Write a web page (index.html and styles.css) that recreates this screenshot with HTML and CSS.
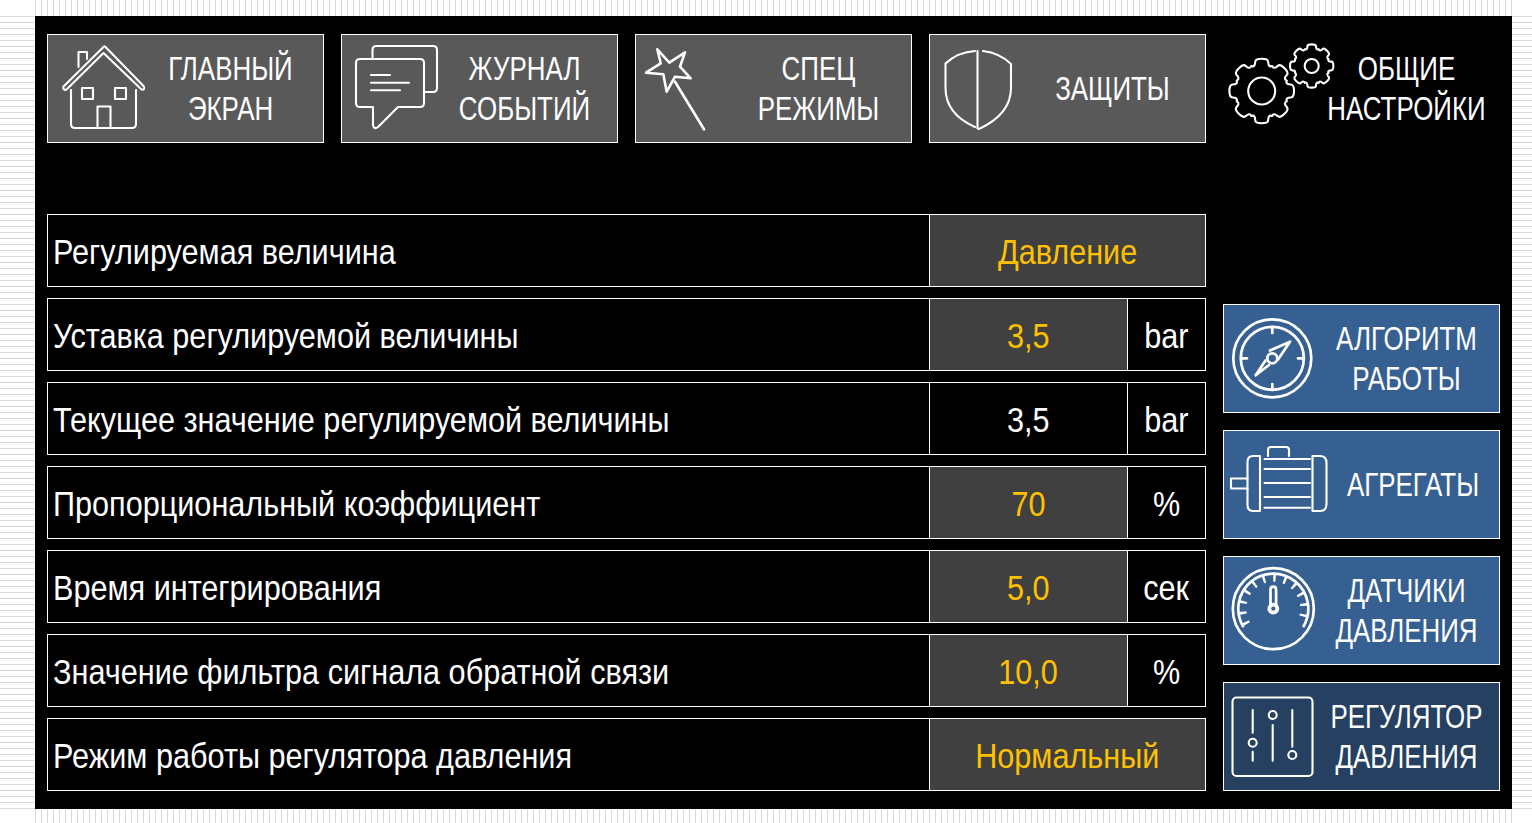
FILE: index.html
```html
<!DOCTYPE html>
<html lang="ru">

<head>
    <meta charset="UTF-8">
    <meta name="viewport" content="width=device-width, initial-scale=1.0">
    <title>Настройки регулятора</title>
    <link rel="stylesheet" href="styles.css">
</head>

<body>
    <div class="page">
        <div class="stripes-v"></div>
        <div class="stripes-h side-left"></div>

        <div class="panel">
            <!-- верхнее меню -->
            <div class="nav">
                <div class="btn btn-gray">
                    <svg class="icon" viewBox="48 35 90 107">
                        <path d="M104 46.5 L63.5 86.5 Q62.5 88 64 89.5 Q65.5 90.5 67 89 L103.5 53 L141 89 Q142.5 90.5 144 89 Q145 87.5 143.5 86 L105.5 47 Q104.5 46 104 46.5Z" />
                        <path d="M71 90 V124 Q71 128 75 128 H132 Q136 128 136 124 V90" />
                        <path d="M78.5 67 V52 H87 V59" />
                        <rect x="82" y="88" width="11" height="11" />
                        <rect x="115" y="88" width="11" height="11" />
                        <path d="M97.5 128 V106.5 H110.5 V128" />
                    </svg>
                    <div class="btn-text">ГЛАВНЫЙ<br>ЭКРАН</div>
                </div>
                <div class="btn btn-gray">
                    <svg class="icon" viewBox="342 35 90 107">
                        <path d="M372.5 58 V50 Q372.5 46 376.5 46 H433 Q437 46 437 50 V88 Q437 92 433 92 H425" />
                        <path d="M360 59 H420 Q424 59 424 63 V103 Q424 107 420 107 H398 L378 127 Q374 130 373 125 V107 H360 Q356 107 356 103 V63 Q356 59 360 59Z" />
                        <path d="M371 75 H390 M371 82.7 H409 M371 90.3 H400" />
                    </svg>
                    <div class="btn-text">ЖУРНАЛ<br>СОБЫТИЙ</div>
                </div>
                <div class="btn btn-gray">
                    <svg class="icon" viewBox="636 35 90 107">
                        <path class="thick" d="M657.3 49.3 L669.3 62.7 L685 52.3 L680 66.7 L690.7 78.3 L675 76.7 L666.7 91.7 L663.3 74.3 L646 72.7 L660.7 63.3Z" />
                        <path class="thick" d="M675 81.7 L704 129.3" />
                    </svg>
                    <div class="btn-text">СПЕЦ<br>РЕЖИМЫ</div>
                </div>
                <div class="btn btn-gray">
                    <svg class="icon" viewBox="930 35 90 107">
                        <path d="M977.5 51 V128.5" />
                        <path d="M975 51 Q958 52 945.5 63.5 V88 Q945.5 114 975 127" />
                        <path d="M983 51 Q1000 53 1011 64 V88 Q1011 114 979 129" />
                    </svg>
                    <div class="btn-text">ЗАЩИТЫ</div>
                </div>
                <div class="btn btn-plain">
                    <svg class="icon" viewBox="1224 35 90 107">
                        <defs>
                            <path id="tooth" d="M-10.3 -24.9 C-7.5 -24 -6.5 -26 -6.5 -29 Q-6.5 -32.3 0 -32.3 Q6.5 -32.3 6.5 -29 C6.5 -26 7.5 -24 10.3 -24.9" />
                        </defs>
                        <g transform="translate(1261.7 91)">
                            <circle r="13.5" />
                            <use href="#tooth" />
                            <use href="#tooth" transform="rotate(45)" />
                            <use href="#tooth" transform="rotate(90)" />
                            <use href="#tooth" transform="rotate(135)" />
                            <use href="#tooth" transform="rotate(180)" />
                            <use href="#tooth" transform="rotate(225)" />
                            <use href="#tooth" transform="rotate(270)" />
                            <use href="#tooth" transform="rotate(315)" />
                        </g>
                        <g class="gear-small" transform="translate(1311.7 66) scale(.67)">
                            <circle r="10.5" />
                            <use href="#tooth" />
                            <use href="#tooth" transform="rotate(45)" />
                            <use href="#tooth" transform="rotate(90)" />
                            <use href="#tooth" transform="rotate(135)" />
                            <use href="#tooth" transform="rotate(180)" />
                            <use href="#tooth" transform="rotate(225)" />
                            <use href="#tooth" transform="rotate(270)" />
                            <use href="#tooth" transform="rotate(315)" />
                        </g>
                    </svg>
                    <div class="btn-text">ОБЩИЕ<br>НАСТРОЙКИ</div>
                </div>
            </div>

            <div class="main">
                <!-- таблица параметров -->
                <div class="params">
                    <div class="row">
                        <div class="label"><span>Регулируемая величина</span></div>
                        <div class="value value-wide edit"><span>Давление</span></div>
                    </div>
                    <div class="row">
                        <div class="label"><span>Уставка регулируемой величины</span></div>
                        <div class="value edit"><span>3,5</span></div>
                        <div class="unit"><span>bar</span></div>
                    </div>
                    <div class="row">
                        <div class="label"><span>Текущее значение регулируемой величины</span></div>
                        <div class="value"><span>3,5</span></div>
                        <div class="unit"><span>bar</span></div>
                    </div>
                    <div class="row">
                        <div class="label"><span>Пропорциональный коэффициент</span></div>
                        <div class="value edit"><span>70</span></div>
                        <div class="unit"><span>%</span></div>
                    </div>
                    <div class="row">
                        <div class="label"><span>Время интегрирования</span></div>
                        <div class="value edit"><span>5,0</span></div>
                        <div class="unit"><span>сек</span></div>
                    </div>
                    <div class="row">
                        <div class="label"><span>Значение фильтра сигнала обратной связи</span></div>
                        <div class="value edit"><span>10,0</span></div>
                        <div class="unit"><span>%</span></div>
                    </div>
                    <div class="row">
                        <div class="label"><span>Режим работы регулятора давления</span></div>
                        <div class="value value-wide edit"><span>Нормальный</span></div>
                    </div>
                </div>

                <!-- правое меню -->
                <div class="side">
                    <div class="btn btn-blue">
                        <svg class="icon icon-bold" viewBox="1224 305 90 107">
                            <circle cx="1272.3" cy="358.3" r="39" />
                            <circle cx="1272.3" cy="358.3" r="31.5" />
                            <circle cx="1272.3" cy="358.3" r="5" />
                            <path d="M1272.3 327 V333 M1272.3 384 V390 M1241 358.3 H1247 M1298 358.3 H1304" />
                            <path d="M1290 341.7 L1270 350.5 M1290 341.7 L1278 359.5" />
                            <path d="M1255.7 375.3 L1265.5 360.5 M1255.7 375.3 L1269 365" />
                        </svg>
                        <div class="btn-text">АЛГОРИТМ<br>РАБОТЫ</div>
                    </div>
                    <div class="btn btn-blue">
                        <svg class="icon" viewBox="1224 431 90 107">
                            <path d="M1247.5 478.5 H1231 V488.5 H1247.5" />
                            <path d="M1260 456 H1253 Q1247.5 456 1247.5 462 V505 Q1247.5 511 1253 511 H1260Z" />
                            <path d="M1312.5 456 H1320 Q1326.5 456 1326.5 463 V504 Q1326.5 511 1320 511 H1312.5Z" />
                            <path d="M1264.5 459 H1310 M1264.5 469 H1310 M1264.5 483 H1310 M1264.5 497 H1310 M1264.5 507.7 H1310" />
                            <path d="M1268 456 V450 Q1268 447 1271 447 H1286 Q1289 447 1289 450 V456" />
                        </svg>
                        <div class="btn-text text-shift">АГРЕГАТЫ</div>
                    </div>
                    <div class="btn btn-blue">
                        <svg class="icon icon-bold" viewBox="1224 557 90 107">
                            <g transform="translate(1273.3 608.7)">
                                <circle r="40.5" />
                                <path d="M-30.3 17.5 A35 35 0 1 1 30.3 17.5" />
                                <path class="ticks" pathLength="240" d="M-26.85 15.5 A31 31 0 1 1 26.85 15.5" />
                                <path d="M-2.8 -3.5 V-19 Q-2.8 -22 0 -22 Q2.8 -22 2.8 -19 V-3.5" />
                                <circle class="bulb" r="4" />
                            </g>
                        </svg>
                        <div class="btn-text">ДАТЧИКИ<br>ДАВЛЕНИЯ</div>
                    </div>
                    <div class="btn btn-dark">
                        <svg class="icon" viewBox="1224 683 90 107">
                            <rect x="1232.5" y="697.5" width="80" height="78.5" rx="4" />
                            <path d="M1252.7 710 V732.7 M1252.7 751.7 V760.7" />
                            <circle cx="1252.7" cy="742.7" r="4" />
                            <circle cx="1272.7" cy="715" r="4" />
                            <path d="M1272.7 725 V760.7" />
                            <path d="M1292.3 710 V746.7" />
                            <circle cx="1292.3" cy="755" r="4" />
                        </svg>
                        <div class="btn-text">РЕГУЛЯТОР<br>ДАВЛЕНИЯ</div>
                    </div>
                </div>
            </div>
        </div>

        <div class="stripes-h side-right"></div>
        <div class="stripes-v bottom"></div>
    </div>
</body>

</html>
```

FILE: styles.css
```css
* {
    box-sizing: border-box;
}

body {
    margin: 0;
    background: #fff;
    overflow: hidden;
}

/* Сетка страницы: панель и полосатый фон вокруг */
.page {
    display: grid;
    grid-template-columns: 35px 1477px 20px;
    grid-template-rows: 16px 793px 14px;
    width: 1532px;
    height: 823px;
    font-family: "Liberation Sans", Arial, sans-serif;
    color: #fff;
}

.stripes-v {
    grid-column: 2 / 3;
    background: repeating-linear-gradient(90deg, #d9d9d9 0, #d9d9d9 1px, #fff 1px, #fff 6px);
}

.stripes-h {
    background: repeating-linear-gradient(180deg, #d9d9d9 0, #d9d9d9 1px, #fff 1px, #fff 6px);
}

.side-left {
    grid-column: 1;
    grid-row: 2;
}

.side-right {
    grid-column: 3;
    grid-row: 2;
}

.panel {
    grid-column: 2;
    grid-row: 2;
    background: #000;
    padding: 18px 12px 0;
}

/* Верхнее меню */
.nav {
    display: flex;
    gap: 17px;
}

.btn {
    display: flex;
    align-items: center;
    flex: none;
    width: 277px;
    height: 109px;
    border: 1px solid #fff;
    font-size: 33px;
    line-height: 40px;
    text-align: center;
}

.btn-gray {
    background: #595959;
}

.btn-plain {
    border-color: transparent;
}

.btn-blue {
    background: #376092;
}

.btn-dark {
    background: #254061;
}

/* шрифт в оригинале узкий, сжимаем по горизонтали */
.btn-text {
    flex: 1;
    margin: 0 -20px;
    transform: scaleX(.785);
}

.text-shift {
    margin-left: -7px;
}

.icon {
    flex: none;
    width: 90px;
    height: 107px;
    overflow: visible;
    fill: none;
    stroke: #fff;
    stroke-width: 2.1;
    stroke-linecap: round;
    stroke-linejoin: round;
}

.icon-bold {
    stroke-width: 2.7;
}

.icon .thick {
    stroke-width: 2.6;
}

.gear-small {
    stroke-width: 3.1;
}

.ticks {
    stroke-linecap: butt;
    stroke-width: 8;
    stroke-dasharray: 4.6 15.4;
}

.bulb {
    stroke-width: 3.8;
}

/* Таблица параметров */
.main {
    display: flex;
    gap: 17px;
    margin-top: 71px;
}

.params {
    display: flex;
    flex-direction: column;
    gap: 11px;
    flex: none;
    width: 1159px;
}

.row {
    display: flex;
    height: 73px;
    border: 1px solid #fff;
    font-size: 35px;
}

.row span {
    transform: scaleX(.875);
}

.label,
.value,
.unit {
    display: flex;
    align-items: center;
    padding-top: 3px;
}

.label {
    flex: 1;
    padding-left: 5px;
}

.label span {
    transform-origin: left center;
}

.value,
.unit {
    flex: none;
    justify-content: center;
    border-left: 1px solid #fff;
}

.value {
    width: 198px;
}

.value-wide {
    width: 276px;
}

.unit {
    width: 78px;
}

.edit {
    background: #404040;
    color: #ffc000;
}

/* Правое меню */
.side {
    display: flex;
    flex-direction: column;
    gap: 17px;
    margin-top: 90px;
}
```
